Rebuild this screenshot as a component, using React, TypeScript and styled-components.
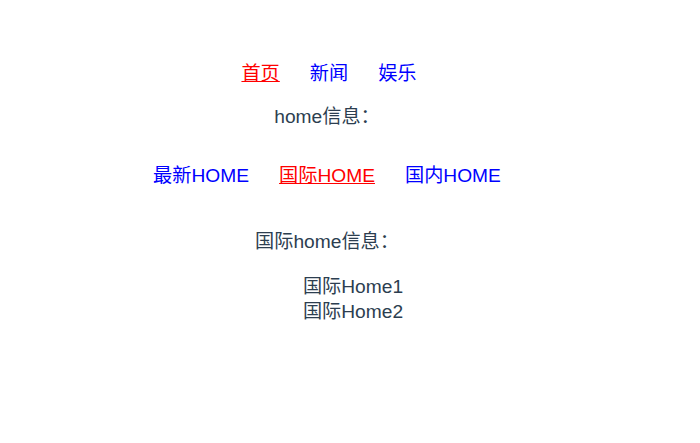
import React from "react";
import styled, { createGlobalStyle } from "styled-components";

const Global = createGlobalStyle`
  body {
    margin: 8px;
    background: #ffffff;
  }
`;

const AppRoot = styled.div`
  margin-top: 53px;
  padding-right: 46px;
  font-family: "Liberation Sans", "Noto Sans CJK SC", sans-serif;
  font-size: 19.2px;
  line-height: 25px;
  color: #2c3e50;
  text-align: center;
`;

const Nav = styled.nav<{ $mt?: number; $shift?: number }>`
  display: flex;
  justify-content: center;
  gap: 30px;
  margin-top: ${(p) => p.$mt ?? 0}px;
  padding-left: ${(p) => p.$shift ?? 0}px;
`;

const NavLink = styled.a<{ $active?: boolean }>`
  color: ${(p) => (p.$active ? "#ff0000" : "#0000ff")};
  text-decoration: ${(p) => (p.$active ? "underline" : "none")};
  cursor: pointer;
`;

const Info = styled.p<{ $mt: number }>`
  margin: ${(p) => p.$mt}px 0 0;
`;

const List = styled.ul`
  list-style: none;
  margin: 20px 0 0;
  padding-left: 52px;
`;

const Item = styled.li``;

export default function App() {
  return (
    <>
      <Global />
      <AppRoot>
        <Nav $shift={4}>
          <NavLink $active>首页</NavLink>
          <NavLink>新闻</NavLink>
          <NavLink>娱乐</NavLink>
        </Nav>
        <Info $mt={18}>home信息：</Info>
        <Nav $mt={34}>
          <NavLink>最新HOME</NavLink>
          <NavLink $active>国际HOME</NavLink>
          <NavLink>国内HOME</NavLink>
        </Nav>
        <Info $mt={41}>国际home信息：</Info>
        <List>
          <Item>国际Home1</Item>
          <Item>国际Home2</Item>
        </List>
      </AppRoot>
    </>
  );
}
